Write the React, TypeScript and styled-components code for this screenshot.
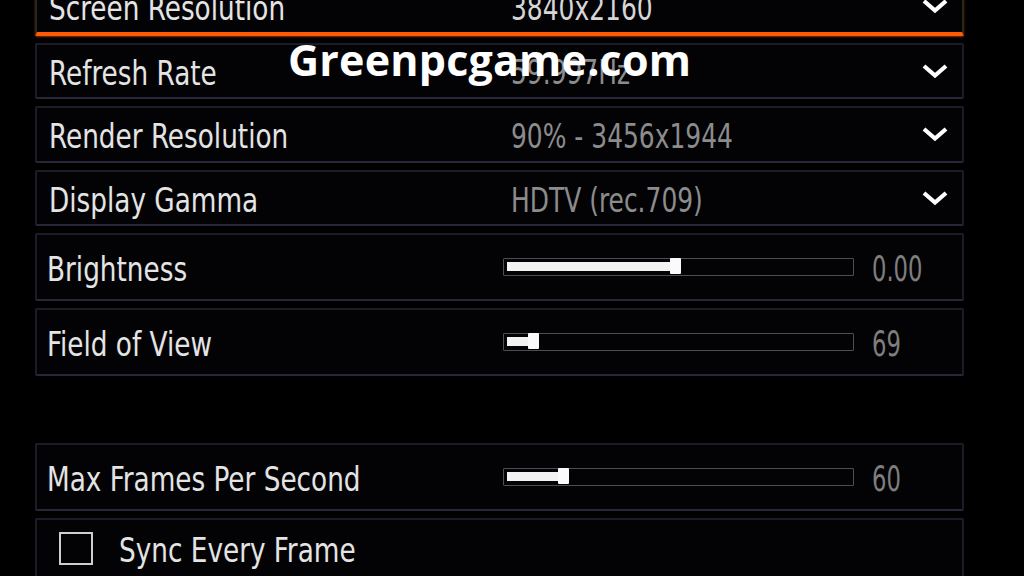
import React from 'react';
import styled, { createGlobalStyle } from 'styled-components';

const GlobalStyle = createGlobalStyle`
  html, body {
    margin: 0;
    padding: 0;
    background: #000;
    overflow: hidden;
  }
  body {
    width: 1024px;
    height: 576px;
    font-family: "DejaVu Sans Condensed", "DejaVu Sans", sans-serif;
    font-stretch: condensed;
  }
`;

const Page = styled.div`
  position: relative;
  width: 1024px;
  height: 576px;
  overflow: hidden;
  background: #000;
`;

const List = styled.div`
  display: flex;
  flex-direction: column;
  gap: 7px;
  width: 929px;
  margin: -21px 0 0 35px;
`;

const Row = styled.div<{ $height: number; $focused?: boolean }>`
  box-sizing: border-box;
  height: ${(p) => p.$height}px;
  flex-shrink: 0;
  display: flex;
  align-items: center;
  background: #030305;
  border: 2px solid #1c1c26;
  border-bottom-color: #272739;
  border-radius: 2px;
  ${(p) =>
    p.$focused &&
    `
    border-color: #2a2716;
    border-bottom: 4px solid #ff5a08;
    box-shadow: 0 1px 2px rgba(255, 90, 8, 0.5);
  `}
`;

const Spacer = styled.div`
  height: 53px;
  flex-shrink: 0;
`;

const Label = styled.div<{ $width: number; $pad: number }>`
  width: ${(p) => p.$width}px;
  padding-left: ${(p) => p.$pad}px;
  flex-shrink: 0;
  box-sizing: border-box;
  white-space: nowrap;
`;

const Squeeze = styled.span<{ $size: number; $color: string; $scale: number; $weight?: number }>`
  display: inline-block;
  font-size: ${(p) => p.$size}px;
  line-height: 1;
  color: ${(p) => p.$color};
  font-weight: ${(p) => p.$weight ?? 400};
  transform: scaleX(${(p) => p.$scale});
  transform-origin: left center;
  white-space: nowrap;
  padding-top: 4px;
`;

const Value = styled.div`
  flex: 1;
  white-space: nowrap;
`;

const Chevron = styled.svg`
  width: 28px;
  height: 16px;
  margin-right: 13px;
  flex-shrink: 0;
`;

const Track = styled.div`
  position: relative;
  box-sizing: border-box;
  width: 351px;
  height: 18px;
  border: 1px solid #4d4d55;
  border-radius: 1px;
  flex-shrink: 0;
`;

const Fill = styled.div`
  position: absolute;
  left: 3px;
  top: 3px;
  height: 9px;
  background: #f2f2f2;
`;

const Knob = styled.div`
  position: absolute;
  top: -1px;
  width: 11px;
  height: 16px;
  background: #fafafa;
  border-radius: 1px;
`;

const SliderValue = styled.div`
  margin-left: 18px;
`;

const Check = styled.div`
  box-sizing: border-box;
  width: 34px;
  height: 33px;
  margin-left: 22px;
  margin-right: 26px;
  border: 2px solid #cfcfcf;
  flex-shrink: 0;
`;

const Watermark = styled.div`
  position: absolute;
  left: 288px;
  top: 38px;
  font-family: "Open Sans", "Noto Sans", sans-serif;
  font-stretch: normal;
  font-weight: 700;
  font-size: 43px;
  line-height: 1;
  color: #fff;
  letter-spacing: 0.2px;
`;

const LABEL = '#e4e4e4';
const DIM = '#8c8c8c';

const Dropdown = ({ label, value, focused }: { label: string; value: string; focused?: boolean }) => (
  <Row $height={56.6} $focused={focused}>
    <Label $width={474} $pad={12}>
      <Squeeze $size={34} $color={LABEL} $scale={0.86}>
        {label}
      </Squeeze>
    </Label>
    <Value>
      <Squeeze $size={33} $color={focused ? '#d6d6d6' : DIM} $scale={0.84}>
        {value}
      </Squeeze>
    </Value>
    <Chevron viewBox="0 0 28 16">
      <polyline points="3,3 14,12.5 25,3" fill="none" stroke="#fff" strokeWidth="4.2" strokeLinejoin="miter" />
    </Chevron>
  </Row>
);

const Slider = ({ label, value, pct }: { label: string; value: string; pct: number }) => {
  const knobLeft = Math.round(pct * 349);
  return (
    <Row $height={68}>
      <Label $width={466} $pad={10}>
        <Squeeze $size={34} $color={LABEL} $scale={0.86}>
          {label}
        </Squeeze>
      </Label>
      <Track>
        <Fill style={{ width: Math.max(knobLeft - 3, 0) }} />
        <Knob style={{ left: knobLeft }} />
      </Track>
      <SliderValue>
        <Squeeze $size={36} $color="#7e7e7e" $scale={0.7} $weight={200}>
          {value}
        </Squeeze>
      </SliderValue>
    </Row>
  );
};

export default function App() {
  return (
    <Page>
      <GlobalStyle />
      <List>
        <Dropdown label="Screen Resolution" value="3840x2160" focused />
        <Dropdown label="Refresh Rate" value="59.997Hz" />
        <Dropdown label="Render Resolution" value="90% - 3456x1944" />
        <Dropdown label="Display Gamma" value="HDTV (rec.709)" />
        <Slider label="Brightness" value="0.00" pct={0.475} />
        <Slider label="Field of View" value="69" pct={0.07} />
        <Spacer />
        <Slider label="Max Frames Per Second" value="60" pct={0.155} />
        <Row $height={60}>
          <Check />
          <Squeeze $size={34} $color={LABEL} $scale={0.86}>
            Sync Every Frame
          </Squeeze>
        </Row>
      </List>
      <Watermark>Greenpcgame.com</Watermark>
    </Page>
  );
}
